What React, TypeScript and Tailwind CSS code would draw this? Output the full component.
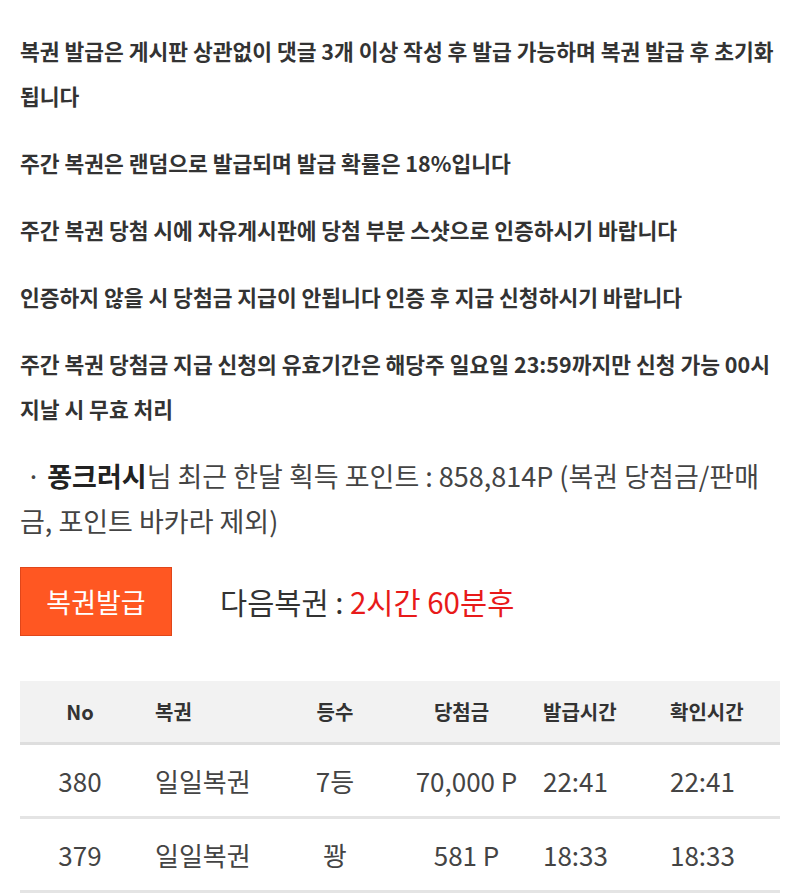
import React from "react";

const notes: string[][] = [
  ["복권 발급은 게시판 상관없이 댓글 3개 이상 작성 후 발급 가능하며 복권 발급 후 초기화", "됩니다"],
  ["주간 복권은 랜덤으로 발급되며 발급 확률은 18%입니다"],
  ["주간 복권 당첨 시에 자유게시판에 당첨 부분 스샷으로 인증하시기 바랍니다"],
  ["인증하지 않을 시 당첨금 지급이 안됩니다 인증 후 지급 신청하시기 바랍니다"],
  ["주간 복권 당첨금 지급 신청의 유효기간은 해당주 일요일 23:59까지만 신청 가능 00시", "지날 시 무효 처리"],
];

const rows = [
  { no: "380", name: "일일복권", rank: "7등", prize: "70,000 P", issued: "22:41", checked: "22:41" },
  { no: "379", name: "일일복권", rank: "꽝", prize: "581 P", issued: "18:33", checked: "18:33" },
];

const font = { fontFamily: '"Noto Sans CJK KR", "Noto Sans", sans-serif' };

export default function App() {
  return (
    <div className="w-[800px] min-h-[893px] bg-white px-5 pt-[28px]" style={font}>
      <div className="flex flex-col gap-[22px]">
        {notes.map((lines, i) => (
          <p key={i} className="text-[21.5px] leading-[45px] font-bold text-[#333] whitespace-nowrap">
            {lines.map((l, j) => (
              <React.Fragment key={j}>
                {j > 0 && <br />}
                {l}
              </React.Fragment>
            ))}
          </p>
        ))}
        <p className="text-[27px] leading-[45px] text-[#444] whitespace-nowrap">
          &nbsp;· <b className="font-bold text-[#222]">퐁크러시</b>님 최근 한달 획득 포인트 : 858,814P (복권 당첨금/판매
          <br />
          금, 포인트 바카라 제외)
        </p>
      </div>

      <div className="mt-[24px] flex items-center">
        <button className="w-[152px] h-[69px] bg-[#ff5722] border border-[#e0461a] text-white text-[27px] leading-none">
          복권발급
        </button>
        <div className="ml-[48px] text-[29.5px] text-[#333]">
          다음복권 : <span className="text-[#e81a1a]">2시간 60분후</span>
        </div>
      </div>

      <div className="mt-[45px] w-[760px]">
        <div className="grid grid-cols-[120px_150px_90px_163px_127px_110px] h-[64px] items-center bg-[#f2f2f2] border-b-[3px] border-[#dedede] text-[20px] font-bold text-[#333]">
          <div className="text-center">No</div>
          <div className="pl-[15px]">복권</div>
          <div className="text-center">등수</div>
          <div className="text-center">당첨금</div>
          <div>발급시간</div>
          <div>확인시간</div>
        </div>
        {rows.map((r) => (
          <div
            key={r.no}
            className="grid grid-cols-[120px_150px_90px_163px_127px_110px] h-[74px] items-center border-b-[3px] border-[#e4e4e4] text-[26px] text-[#444]"
          >
            <div className="text-center">{r.no}</div>
            <div className="pl-[15px]">{r.name}</div>
            <div className="text-center">{r.rank}</div>
            <div className="text-center pl-[10px]">{r.prize}</div>
            <div>{r.issued}</div>
            <div>{r.checked}</div>
          </div>
        ))}
      </div>
    </div>
  );
}
